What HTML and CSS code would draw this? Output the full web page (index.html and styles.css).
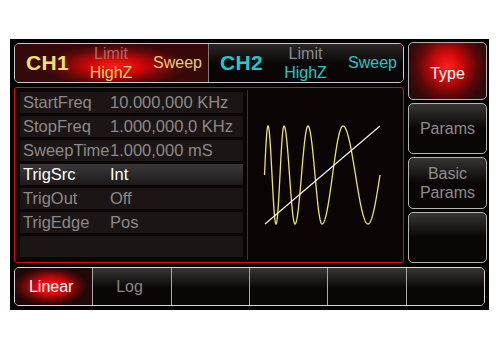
FILE: index.html
```html
<!DOCTYPE html>
<html lang="en">
<head>
  <meta charset="UTF-8">
  <title>Sweep</title>
  <link rel="stylesheet" href="styles.css">
</head>
<body>
  <div class="screen">
    <div class="header">
      <div class="ch ch1">
        <span class="ch-name">CH1</span>
        <span class="ch-mode"><span class="limit">Limit</span><span class="load">HighZ</span></span>
        <span class="ch-func">Sweep</span>
      </div>
      <div class="ch ch2">
        <span class="ch-name">CH2</span>
        <span class="ch-mode"><span class="limit">Limit</span><span class="load">HighZ</span></span>
        <span class="ch-func">Sweep</span>
      </div>
    </div>

    <div class="main">
      <div class="params">
        <div class="row"><span class="label">StartFreq</span><span>10.000,000 KHz</span></div>
        <div class="row"><span class="label">StopFreq</span><span>1.000,000,0 KHz</span></div>
        <div class="row"><span class="label">SweepTime</span><span>1.000,000 mS</span></div>
        <div class="row active"><span class="label">TrigSrc</span><span>Int</span></div>
        <div class="row"><span class="label">TrigOut</span><span>Off</span></div>
        <div class="row"><span class="label">TrigEdge</span><span>Pos</span></div>
        <div class="row"></div>
      </div>
      <div class="divider"></div>
      <div class="wave">
        <svg width="155" height="174" viewBox="248 88 155 174">
          <polyline id="chirp" fill="none" stroke="#ece46a" stroke-width="1.3" points=""/>
          <line x1="265" y1="224" x2="380" y2="126" stroke="#f4f4f4" stroke-width="1.2"/>
        </svg>
      </div>
    </div>

    <div class="side">
      <div class="soft on">Type</div>
      <div class="soft">Params</div>
      <div class="soft">Basic<br>Params</div>
      <div class="soft"></div>
    </div>

    <div class="menu">
      <div class="cell on">Linear</div>
      <div class="cell">Log</div>
      <div class="cell"></div>
      <div class="cell"></div>
      <div class="cell"></div>
      <div class="cell"></div>
    </div>
  </div>

  <script>
    // chirp: phase knots read off the trace (x in px, phase in units of pi)
    const xs = [264.5, 268, 276, 284, 295, 308, 322, 343, 368, 380];
    const ph = [0, 0.5, 1.5, 2.5, 3.5, 4.5, 5.5, 6.5, 7.5, 8];
    const pts = [];
    for (let x = xs[0]; x <= xs[xs.length - 1]; x += 0.25) {
      let i = 0;
      while (i < xs.length - 2 && x > xs[i + 1]) i++;
      const t = (x - xs[i]) / (xs[i + 1] - xs[i]);
      const p = (ph[i] + t * (ph[i + 1] - ph[i])) * Math.PI;
      pts.push(x.toFixed(2) + "," + (175 - 49 * Math.sin(p)).toFixed(2));
    }
    document.getElementById("chirp").setAttribute("points", pts.join(" "));
  </script>
</body>
</html>
```

FILE: styles.css
```css
body {
  margin: 0;
  padding: 39px 0 0 10px;
  background: #fff;
  font-family: "Liberation Sans", Arial, sans-serif;
}
.screen {
  width: 473px;
  height: 263px;
  padding: 4px 2px 4px 4px;
  background: #060101;
  display: grid;
  grid-template-columns: 390px 79px;
  grid-template-rows: 40px 176px 39px;
  column-gap: 4px;
  row-gap: 4px;
}

/* channel header */
.header {
  grid-column: 1;
  grid-row: 1;
  display: flex;
  border: 1px solid #c9c9c9;
  border-radius: 5px;
  overflow: hidden;
}
.ch {
  display: flex;
  align-items: center;
  justify-content: space-between;
  padding: 0 6px 0 11px;
  font-size: 16px;
}
.ch1 {
  width: 176px;
  background: radial-gradient(ellipse 72px 22px at 52% 58%, #ff1c1c 0%, #d40606 35%, #640808 75%, #360808 100%);
  border-right: 1px solid #7a7a7a;
}
.ch2 {
  flex: 1;
  background: linear-gradient(#2a2626, #0a0505 55%);
}
.ch-name { font-size: 21px; font-weight: bold; letter-spacing: 0.3px; }
.ch-mode {
  display: flex;
  flex-direction: column;
  align-items: center;
  line-height: 19px;
  margin-top: -1px;
}
.ch1 .ch-name { color: #f1e06a; }
.ch1 .limit { color: #a46a6a; }
.ch1 .load { color: #f2d26e; }
.ch1 .ch-func { color: #eccc74; }
.ch2 .ch-name, .ch2 .load, .ch2 .ch-func { color: #23c7c8; }
.ch2 .limit { color: #8c8c8c; }

/* main parameter panel */
.main {
  grid-column: 1;
  grid-row: 2;
  display: flex;
  border: 1px solid #d80e14;
  border-radius: 3px;
  background: #0b0404;
}
.params {
  width: 224px;
  padding: 4px 4px 0 5px;
  display: flex;
  flex-direction: column;
  gap: 3px;
}
.row {
  height: 21px;
  line-height: 21px;
  padding-left: 3px;
  background: #1b1515;
  color: #8c8989;
  font-size: 16.5px;
  display: flex;
  white-space: nowrap;
}
.row .label { min-width: 87px; }
.row.active {
  background: linear-gradient(#3a3838, #1c1a1a);
  color: #fff;
}
.divider {
  width: 1px;
  margin: 2px 0;
  background: #3a3535;
}
.wave { flex: 1; }
.wave svg { display: block; }

/* softkeys */
.side {
  grid-column: 2;
  grid-row: 1 / 3;
  display: flex;
  flex-direction: column;
  gap: 3px;
  margin-top: -1px;
}
.soft {
  flex: 1;
  border: 1px solid #b4b4b4;
  border-radius: 5px;
  background: linear-gradient(#363434, #0b0606 50%);
  color: #8e8c8c;
  font-size: 16px;
  line-height: 19px;
  display: flex;
  align-items: center;
  justify-content: center;
  text-align: center;
}
.soft.on {
  background: radial-gradient(circle 40px at 50% 42%, #ff2222 0%, #d00808 35%, #5a0808 75%, #2e0a0a 100%);
  color: #fff;
  padding-top: 6px;
}

/* bottom menu */
.menu {
  grid-column: 1 / 3;
  grid-row: 3;
  display: flex;
  border: 1px solid #d8d8d8;
  border-radius: 5px;
  overflow: hidden;
  margin-right: 2px;
}
.cell {
  flex: 1;
  border-left: 1px solid #a8a8a8;
  background: linear-gradient(#383636, #0b0606 55%);
  color: #8a8888;
  font-size: 16px;
  display: flex;
  align-items: center;
  justify-content: center;
  padding-right: 5px;
}
.cell:first-child { border-left: none; }
.cell.on {
  background: radial-gradient(ellipse 38px 20px at 46% 50%, #ff1a1a 0%, #d00808 40%, #4a0808 80%, #1e0808 100%);
  color: #fff;
}
```
